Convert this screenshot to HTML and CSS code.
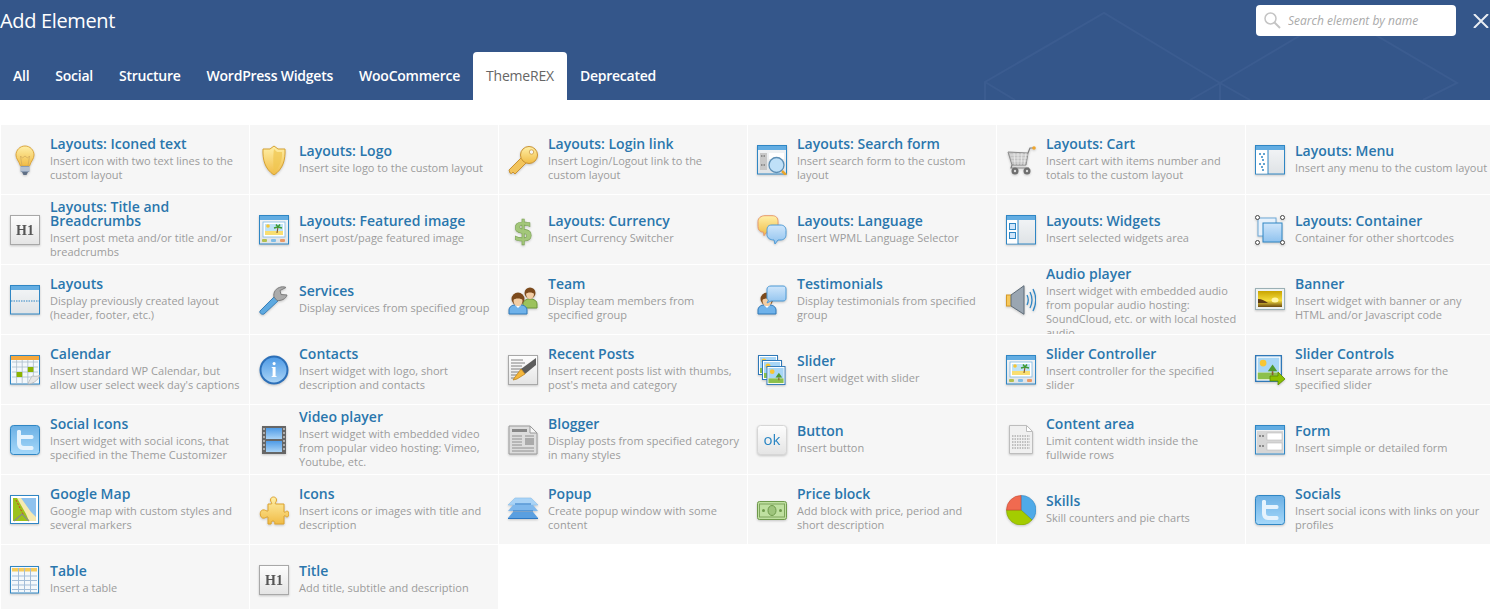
FILE: index.html
```html
<!DOCTYPE html>
<html>
<head>
    <meta charset="UTF-8">
    <title>Add Element</title>
    <link rel="stylesheet" href="styles.css">
</head>
<body>
    <!-- shared icon drawings, 30x30 -->
    <svg class="sprite" xmlns="http://www.w3.org/2000/svg">
        <defs>
            <linearGradient id="gGold" x1="0" y1="0" x2="0" y2="1"><stop offset="0" stop-color="#fff0a8"/><stop offset="1" stop-color="#f0bb45"/></linearGradient>
            <linearGradient id="gWin" x1="0" y1="0" x2="0" y2="1"><stop offset="0" stop-color="#f4f6f8"/><stop offset="1" stop-color="#dfe3e6"/></linearGradient>
            <linearGradient id="gBlue" x1="0" y1="0" x2="0" y2="1"><stop offset="0" stop-color="#cfe6fb"/><stop offset="1" stop-color="#8fc2ee"/></linearGradient>
            <linearGradient id="gBox" x1="0" y1="0" x2="0" y2="1"><stop offset="0" stop-color="#fdfdfd"/><stop offset="1" stop-color="#e4e4e4"/></linearGradient>
            <linearGradient id="gTw" x1="0" y1="0" x2="0" y2="1"><stop offset="0" stop-color="#6cb0e4"/><stop offset="1" stop-color="#a5d8fa"/></linearGradient>
            <linearGradient id="gBanner" x1="0" y1="0" x2="0" y2="1"><stop offset="0" stop-color="#c9a400"/><stop offset=".6" stop-color="#f4dc3c"/><stop offset="1" stop-color="#6b4a10"/></linearGradient>
            <linearGradient id="gFilm" x1="0" y1="0" x2="0" y2="1"><stop offset="0" stop-color="#4f9be6"/><stop offset="1" stop-color="#a9d3f6"/></linearGradient>
        </defs>

        <symbol id="i-win" viewBox="0 0 30 30">
            <rect x=".5" y=".5" width="29" height="28.5" fill="url(#gWin)" stroke="#2f86c4"/>
            <rect x="1" y="1" width="28" height="4" fill="#63ade2"/>
        </symbol>
        <symbol id="i-bulb" viewBox="0 0 30 30">
            <path d="M15 1C10 1 6 5 6 10c0 4 3 6 4.500 11h9c1.500-5 4.500-7 4.500-11 0-5-4-9-9-9z" fill="url(#gGold)" stroke="#dca63c"/>
            <path d="M12 21l-1.500-10 2 2 2.500-2 2.500 2 2-2-1.500 10" fill="none" stroke="#cfa85c" stroke-width=".7"/>
            <rect x="10.500" y="21" width="9" height="6" rx="1" fill="#8a9cb4"/>
            <path d="M10.500 23h9M10.500 25h9" stroke="#dfe6ee"/>
            <path d="M12 27h6l-1.500 3h-3z" fill="#5f6f85"/>
        </symbol>
        <symbol id="i-shield" viewBox="0 0 30 30">
            <path d="M15 1l4 3h7c.500 11-2 20-11 26C6 24 3.500 15 4 4h7z" fill="url(#gGold)" stroke="#d6a232"/>
            <path d="M15 4c-1 6-1 16 0 23 6-5 8.500-12 8-20h-5z" fill="#f0c650" opacity=".7"/>
        </symbol>
        <symbol id="i-key" viewBox="0 0 30 30">
            <path d="M1 25L14 12l5 5L7 29l-2-2-1.500 1.500L2 28z" fill="#f2c45c" stroke="#c99232"/>
            <circle cx="21" cy="10" r="8.500" fill="url(#gGold)" stroke="#c99232"/>
            <circle cx="23.500" cy="7" r="2.200" fill="#f5f5f5" stroke="#c99232" stroke-width=".7"/>
        </symbol>
        <symbol id="i-searchform" viewBox="0 0 30 30">
            <use href="#i-win"/>
            <rect x="3" y="8" width="7" height="17" fill="#c8c8c8"/>
            <rect x="12" y="8" width="15" height="6" fill="#fff"/>
            <path d="M4 11h4M4 20h4" stroke="#555" stroke-dasharray="1.500 1"/>
            <circle cx="19.500" cy="20" r="7.500" fill="#bfe0f8" stroke="#5d8fb5" stroke-width="1.300"/>
            <path d="M25 26l4 4" stroke="#e8a52c" stroke-width="2.500"/>
        </symbol>
        <symbol id="i-cart" viewBox="0 0 30 30">
            <path d="M2 7l20 1-2 12H6z" fill="#c4c4c4" stroke="#8c8c8c"/>
            <path d="M4 10h18M5 13h16M5.500 16h15M8 8l1 12M12 8v12M16 8l-1 12M20 8l-2 12" stroke="#f0f0f0" stroke-width=".7" fill="none"/>
            <path d="M22 8l2-5h3M6 20l-1 3h18" stroke="#808080" stroke-width="1.200" fill="none"/>
            <circle cx="28" cy="3" r="1.800" fill="#f0a52c"/>
            <circle cx="9" cy="26" r="3.500" fill="#6e6e6e"/><circle cx="9" cy="26" r="1.200" fill="#ddd"/>
            <circle cx="21" cy="26" r="3.500" fill="#6e6e6e"/><circle cx="21" cy="26" r="1.200" fill="#ddd"/>
        </symbol>
        <symbol id="i-menu" viewBox="0 0 30 30">
            <use href="#i-win"/>
            <rect x="1" y="5" width="12" height="23.500" fill="#fff"/>
            <path d="M13 5v24" stroke="#2f86c4"/>
            <path d="M4 9h2M8 9h2M6 12h2M7 15h2M4 19h2M8 19h2M6 22h2M7 25h2" stroke="#2f86c4" stroke-width="1.400"/>
        </symbol>
        <symbol id="i-box" viewBox="0 0 30 30">
            <rect x=".5" y=".5" width="29" height="29" fill="url(#gBox)" stroke="#a8a8a8"/>
        </symbol>
        <symbol id="i-pic" viewBox="0 0 30 30">
            <use href="#i-win"/>
            <rect x="4" y="7" width="22" height="15" fill="#fff" stroke="#7db8e4" stroke-width=".8"/>
            <rect x="6" y="9" width="18" height="7" fill="#bfe3f6"/>
            <rect x="6" y="16" width="18" height="4" fill="#f8de72"/>
            <circle cx="9" cy="11" r="1.800" fill="#f8c634"/>
            <path d="M18 18l1-6" stroke="#8a5a2a" stroke-width="1.200"/>
            <path d="M19 12l-4 1M19 12l4 1M19 12l-2-2.500M19 12l2-2.500" stroke="#3f9a34" stroke-width="1.500"/>
            <rect x="3" y="24" width="5" height="3" rx="1" fill="#b4c050"/>
            <rect x="12" y="24" width="5" height="3" rx="1" fill="#7fbde8"/>
            <rect x="21" y="24" width="5" height="3" rx="1" fill="#ec9a66"/>
        </symbol>
        <symbol id="i-bubbles" viewBox="0 0 30 30">
            <path d="M8 .700h7c4 0 6 2 6 6v5c0 4-2 6-6 6H9l-2 3-.500-3.500C3 17 1 15 1 11.500v-5C1 3 4 .700 8 .700z" fill="url(#gGold)" stroke="#e89a6a"/>
            <path d="M15 10h8c4 0 6 2 6 5.500v4c0 3.500-2 5.500-6 5.500h-2l-3 4-1-4c-4 0-7-2-7-5.500v-4C10 12 11 10 15 10z" fill="url(#gBlue)" stroke="#4d9ad6"/>
        </symbol>
        <symbol id="i-widgets" viewBox="0 0 30 30">
            <use href="#i-win"/>
            <rect x="1" y="5" width="11" height="23.500" fill="#fff"/>
            <path d="M12 5v24" stroke="#2f86c4"/>
            <rect x="3.500" y="8.500" width="6" height="6" fill="#cfe6fb" stroke="#2f86c4"/>
            <rect x="3.500" y="17.500" width="6" height="6" fill="#cfe6fb" stroke="#2f86c4"/>
        </symbol>
        <symbol id="i-container" viewBox="0 0 30 30">
            <rect x="3" y="3" width="18" height="18" fill="#e6f1fb" stroke="#6fa9d8"/>
            <rect x="8" y="8" width="19" height="19" fill="url(#gBlue)" stroke="#2f86c4"/>
            <g fill="#fff" stroke="#444"><circle cx="2.500" cy="2.500" r="2"/><circle cx="27.500" cy="2.500" r="2"/><circle cx="2.500" cy="27.500" r="2"/><circle cx="27.500" cy="27.500" r="2"/></g>
        </symbol>
        <symbol id="i-layout" viewBox="0 0 30 30">
            <use href="#i-win"/>
            <path d="M1 16h28" stroke="#2f86c4" stroke-dasharray="1.500 1"/>
        </symbol>
        <symbol id="i-wrench" viewBox="0 0 30 30">
            <path d="M1 26L16 11l4 4L5 29c-2 1-5-1-4-3z" fill="#5ea9e0" stroke="#3a80b8"/>
            <path d="M15 12c-1-5 2-9 7-10 2-.500 4 0 5 .500l-6 3 1 4 6 .500c-1 4-6 6-10 5.500z" fill="#ababab" stroke="#7c7c7c"/>
        </symbol>
        <symbol id="i-person" viewBox="0 0 20 24">
            <path d="M1 23v-4c0-3 3-5 6-5h6c3 0 6 2 6 5v4z" fill="#6fb2ea" stroke="#2f78b8"/>
            <path d="M7 14l3 3 3-3z" fill="#fff"/>
            <circle cx="10" cy="8" r="6.500" fill="#7c4a1c"/>
            <path d="M5.500 9c1-2 8-2 9 0 0 4-2 6-4.500 6s-4.500-2-4.500-6z" fill="#f2cda4"/>
        </symbol>
        <symbol id="i-team" viewBox="0 0 30 30">
            <path d="M15 23v-4c0-3 2-4 5-5h4c3 1 5 2 5 5v4z" fill="#9cc25c" stroke="#6d9638"/>
            <circle cx="22" cy="8" r="5.500" fill="#7c4a1c"/>
            <path d="M18 9c1-2 7-2 8 0 0 3-2 5-4 5s-4-2-4-5z" fill="#f2cda4"/>
            <use href="#i-person" x="0" y="6" width="20" height="24"/>
        </symbol>
        <symbol id="i-testi" viewBox="0 0 30 30">
            <use href="#i-person" x="0" y="6" width="20" height="24"/>
            <path d="M14 1h12c2 0 3 1 3 3v9c0 2-1 3-3 3H14l-4 2 1.500-3c-1-.500-1.500-1-1.500-2V4c0-2 2-3 4-3z" fill="url(#gBlue)" stroke="#4d9ad6"/>
        </symbol>
        <symbol id="i-speaker" viewBox="0 0 30 30">
            <rect x=".5" y="10" width="5" height="11" fill="#f6c85c" stroke="#d59a28"/>
            <path d="M5 10L18 .700v28.600L5 21z" fill="#9aa6b2" stroke="#5f6c78"/>
            <path d="M21 10c1.500 3 1.500 7 0 10M24 7c2.500 5 2.500 11 0 16M27 4c3.500 7 3.500 15 0 22" fill="none" stroke="#2f86c4" stroke-width="1.300"/>
        </symbol>
        <symbol id="i-banner" viewBox="0 0 30 30">
            <rect x=".5" y="3.500" width="29" height="21" fill="#eef2f2" stroke="#9bb0b5"/>
            <rect x="3" y="6" width="24" height="16" fill="url(#gBanner)"/>
            <path d="M3 14c4 0 7 2 10 4H3z" fill="#5c3a14"/>
            <ellipse cx="20" cy="15" rx="3.500" ry="2.500" fill="#fff6a8"/>
        </symbol>
        <symbol id="i-calendar" viewBox="0 0 30 30">
            <rect x=".5" y=".5" width="29" height="28.500" fill="#f4f8fb" stroke="#2f86c4"/>
            <rect x="1" y="1" width="28" height="4" fill="#f6a83c"/>
            <path d="M2 7h26M2 12h26M2 17h26M2 22h26M6.600 5v24M12.200 5v24M17.800 5v24M23.400 5v24" stroke="#a9bdcb" stroke-width=".8"/>
            <rect x="6.600" y="17" width="5.600" height="5" fill="#8cb400"/>
            <rect x="17.800" y="12" width="5.600" height="5" fill="#8cb400"/>
            <path d="M18 29c4 0 10-3 12-9-3 2-6 1-8 1-1 2-3 5-4 8z" fill="#e6e6e6" stroke="#b0b0b0" stroke-width=".7"/>
        </symbol>
        <symbol id="i-info" viewBox="0 0 30 30">
            <circle cx="15" cy="15" r="14.500" fill="#2c6fb8"/>
            <circle cx="15" cy="15" r="12.500" fill="url(#gFilm)"/>
        </symbol>
        <symbol id="i-posts" viewBox="0 0 30 30">
            <use href="#i-box"/>
            <path d="M3 5h12M3 8h14M3 11h11M3 14h12M3 17h8M3 20h6M3 23h4" stroke="#666" stroke-width=".8"/>
            <path d="M28 3l-15 11 4 5 11-9z" fill="#5c5c5c"/>
            <path d="M13 14l-6 8-2 3 4-1 8-5z" fill="#f4b63c" stroke="#b67c14" stroke-width=".7"/>
        </symbol>
        <symbol id="i-picture" viewBox="0 0 20 20">
            <rect x=".5" y=".5" width="19" height="19" fill="#fff" stroke="#2f78b8"/>
            <rect x="2" y="2" width="16" height="11" fill="#a8d6f6"/>
            <rect x="2" y="13" width="16" height="5" fill="#8cc04c"/>
            <circle cx="6" cy="6" r="2.500" fill="#f8c634"/>
            <path d="M13 7l3.500 5h-7z" fill="#4f9a30"/>
            <path d="M13 12v3" stroke="#8a5a2a" stroke-width="1.200"/>
        </symbol>
        <symbol id="i-slider" viewBox="0 0 30 30">
            <use href="#i-picture" x="0" y="0" width="22" height="20"/>
            <use href="#i-picture" x="4" y="5" width="22" height="20"/>
            <use href="#i-picture" x="8" y="11" width="22" height="19"/>
        </symbol>
        <symbol id="i-arrows" viewBox="0 0 30 30">
            <use href="#i-picture" x="0" y="0" width="27" height="27"/>
            <path d="M15 21h8v-4l7 7-7 6v-4h-8z" fill="#8cc000" stroke="#5b8a00" stroke-width=".8"/>
        </symbol>
        <symbol id="i-twitter" viewBox="0 0 30 30">
            <rect x=".5" y=".5" width="29" height="29" rx="3" fill="url(#gTw)" stroke="#2f86c4"/>
            <path d="M7 6c0-1.500 4-1.500 4 0v4h11c2 0 2 4 0 4H11v4c0 2 1 3 3 3h8c2 0 2 4 0 4h-9c-4 0-6-3-6-7z" fill="#e6f3fd"/>
        </symbol>
        <symbol id="i-film" viewBox="0 0 30 30">
            <rect x="3" y="1" width="24" height="28" fill="#666"/>
            <rect x="7" y="3" width="16" height="11" fill="url(#gFilm)"/>
            <rect x="7" y="16" width="16" height="11" fill="url(#gFilm)"/>
            <path d="M5 3v24M25 3v24" stroke="#ddd" stroke-width="1.200" stroke-dasharray="2 2"/>
        </symbol>
        <symbol id="i-news" viewBox="0 0 30 30">
            <path d="M1 1h21l7 7v21H1z" fill="#ddd" stroke="#9a9a9a"/>
            <path d="M22 1v7h7z" fill="#f6f6f6" stroke="#9a9a9a"/>
            <rect x="4" y="4" width="15" height="3" fill="#888"/>
            <path d="M4 11h10M4 14h10M4 17h10M4 20h10M4 23h22M4 26h22M17 11h9" stroke="#888" stroke-width=".9"/>
            <rect x="17" y="13" width="9" height="7" fill="#aaa"/>
        </symbol>
        <symbol id="i-button" viewBox="0 0 30 30">
            <rect x=".5" y=".5" width="29" height="29" rx="3" fill="url(#gBox)" stroke="#d6d6d6"/>
        </symbol>
        <symbol id="i-doc" viewBox="0 0 30 30">
            <path d="M3.500 .5h17l6 6v22h-23z" fill="#f0f0f0" stroke="#bdbdbd"/>
            <path d="M20.500 .5v6h6z" fill="#fff" stroke="#bdbdbd"/>
            <path d="M6 11h18M6 14h18M6 17h18M6 20h18M6 23h18" stroke="#777" stroke-dasharray="1.500 1" stroke-width=".8"/>
        </symbol>
        <symbol id="i-form" viewBox="0 0 30 30">
            <use href="#i-win"/>
            <rect x="2" y="6" width="26" height="22" fill="#d6d6d6"/>
            <rect x="12" y="8" width="15" height="7" fill="#fff" stroke="#bbb" stroke-width=".6"/>
            <rect x="12" y="18" width="15" height="7" fill="#fff" stroke="#bbb" stroke-width=".6"/>
            <path d="M4 11h6M4 21h6" stroke="#444" stroke-dasharray="2 1"/>
        </symbol>
        <symbol id="i-map" viewBox="0 0 30 30">
            <rect x=".5" y=".5" width="28" height="28" fill="#fff" stroke="#2f86c4"/>
            <rect x="3" y="3" width="23" height="23" fill="#8fc2ee"/>
            <path d="M3 3h8l10 14 5 5v4H3z" fill="#f6e9b0"/>
            <path d="M3 3h4l9 16 3 7H3z" fill="#9cc21c"/>
            <path d="M6 5l5 10 3 6" stroke="#d03a2a" stroke-dasharray="2 1.500" fill="none"/>
            <path d="M4 26l8-7 7 7" stroke="#8a8a8a" stroke-width="1.200" fill="none"/>
        </symbol>
        <symbol id="i-puzzle" viewBox="0 0 30 30">
            <path d="M9 9h3.500c1-1-1-2-1-4 0-4 6-4 6 0 0 2-2 3-1 4H25v8c1 1 2-1 3-1 2.500 0 2.500 6 0 6-1 0-2-2-3-1v8H16c-1 1 1-3-2-3s-1 3-2 3H9v-7c-1-1-3 2-5.500 1-3-1.500-3-7 0-8C6 14 8 17 9 16z" fill="url(#gGold)" stroke="#dda22c"/>
        </symbol>
        <symbol id="i-popup" viewBox="0 0 30 30">
            <path d="M7 3h16l7 7H0z" fill="#a9d3f6" stroke="#8cc0ec" stroke-width=".6"/>
            <path d="M5 10h20l5 6H0z" fill="#7fb8ec"/>
            <path d="M5 17h20l5 6H0z" fill="#5a9fe0"/>
            <path d="M7 9h16M5 16h20M0 23.500h30" stroke="#2c78c4" stroke-width="1.200"/>
        </symbol>
        <symbol id="i-money" viewBox="0 0 30 30">
            <rect x=".5" y="6.500" width="29" height="18" rx="2" fill="#bfe0a0" stroke="#6f9a4c"/>
            <rect x="2.500" y="9" width="25" height="13" fill="none" stroke="#7ea45c"/>
            <ellipse cx="15" cy="15.500" rx="4" ry="5" fill="#9ec47c" stroke="#6f9a4c"/>
            <circle cx="6.500" cy="15.500" r="1.500" fill="#6f9a4c"/>
            <circle cx="23.500" cy="15.500" r="1.500" fill="#6f9a4c"/>
        </symbol>
        <symbol id="i-pie" viewBox="0 0 30 30">
            <path d="M15 15V.5A14.500 14.500 0 0 1 26 25z" fill="#4faae8" stroke="#2f86c4" stroke-width=".6"/>
            <path d="M15 15L26 25A14.500 14.500 0 0 1 .5 15z" fill="#a4cc00" stroke="#7aa000" stroke-width=".6"/>
            <path d="M15 15H.5A14.500 14.500 0 0 1 15 .5z" fill="#f06a50" stroke="#c94c34" stroke-width=".6"/>
        </symbol>
        <symbol id="i-table" viewBox="0 0 30 30">
            <rect x=".5" y="1.500" width="28" height="26.500" fill="#f4f8fb" stroke="#2f86c4"/>
            <rect x="2" y="3" width="25" height="3.500" fill="#f6cc5c"/>
            <path d="M2 11h25M2 15.500h25M2 20h25M2 24.500h25M8.500 3v24M14.500 3v24M20.500 3v24" stroke="#a3bdd8"/>
        </symbol>
    </svg>

    <div class="header">
        <svg class="pattern" width="1490" height="100" viewBox="0 0 1490 100">
            <path d="M985 100V82L1104 13l116 70v17M985 82l30 18M1220 83l30 17M1220 83l-30 17M1220 83l118-70 119 70-34 17" fill="none" stroke="#3b5c90" stroke-width="2"/>
        </svg>
        <div class="topbar">
            <div class="title">Add Element</div>
            <div class="search">
                <svg class="search-icon" width="17" height="17" viewBox="0 0 17 17">
                    <circle cx="6.500" cy="6.500" r="5.500" fill="none" stroke="#c4c4c4" stroke-width="1.500"/>
                    <path d="M10.500 10.500l5.500 5.500" stroke="#c4c4c4" stroke-width="2"/>
                </svg>
                <input type="text" placeholder="Search element by name">
            </div>
            <svg class="close" width="16" height="14" viewBox="0 0 16 14">
                <path d="M1 0l14 14M15 0L1 14" stroke="#e9edf3" stroke-width="2"/>
            </svg>
        </div>
        <div class="tabs">
            <a class="tab">All</a>
            <a class="tab">Social</a>
            <a class="tab">Structure</a>
            <a class="tab">WordPress Widgets</a>
            <a class="tab">WooCommerce</a>
            <a class="tab active">ThemeREX</a>
            <a class="tab">Deprecated</a>
        </div>
    </div>

    <div class="grid">
        <a class="card"><svg class="icon"><use href="#i-bulb"/></svg><div class="text"><h4>Layouts: Iconed text</h4><p>Insert icon with two text lines to the custom layout</p></div></a>
        <a class="card"><svg class="icon"><use href="#i-shield"/></svg><div class="text"><h4>Layouts: Logo</h4><p>Insert site logo to the custom layout</p></div></a>
        <a class="card"><svg class="icon"><use href="#i-key"/></svg><div class="text"><h4>Layouts: Login link</h4><p>Insert Login/Logout link to the custom layout</p></div></a>
        <a class="card"><svg class="icon"><use href="#i-searchform"/></svg><div class="text"><h4>Layouts: Search form</h4><p>Insert search form to the custom layout</p></div></a>
        <a class="card"><svg class="icon"><use href="#i-cart"/></svg><div class="text"><h4>Layouts: Cart</h4><p>Insert cart with items number and totals to the custom layout</p></div></a>
        <a class="card"><svg class="icon"><use href="#i-menu"/></svg><div class="text"><h4>Layouts: Menu</h4><p>Insert any menu to the custom layout</p></div></a>

        <a class="card"><svg class="icon"><use href="#i-box"/><text x="15" y="20" class="svg-h1">H1</text></svg><div class="text"><h4>Layouts: Title and Breadcrumbs</h4><p>Insert post meta and/or title and/or breadcrumbs</p></div></a>
        <a class="card"><svg class="icon"><use href="#i-pic"/></svg><div class="text"><h4>Layouts: Featured image</h4><p>Insert post/page featured image</p></div></a>
        <a class="card"><svg class="icon"><text x="15" y="26" class="svg-dollar">$</text></svg><div class="text"><h4>Layouts: Currency</h4><p>Insert Currency Switcher</p></div></a>
        <a class="card"><svg class="icon"><use href="#i-bubbles"/></svg><div class="text"><h4>Layouts: Language</h4><p>Insert WPML Language Selector</p></div></a>
        <a class="card"><svg class="icon"><use href="#i-widgets"/></svg><div class="text"><h4>Layouts: Widgets</h4><p>Insert selected widgets area</p></div></a>
        <a class="card"><svg class="icon"><use href="#i-container"/></svg><div class="text"><h4>Layouts: Container</h4><p>Container for other shortcodes</p></div></a>

        <a class="card"><svg class="icon"><use href="#i-layout"/></svg><div class="text"><h4>Layouts</h4><p>Display previously created layout (header, footer, etc.)</p></div></a>
        <a class="card"><svg class="icon"><use href="#i-wrench"/></svg><div class="text"><h4>Services</h4><p>Display services from specified group</p></div></a>
        <a class="card"><svg class="icon"><use href="#i-team"/></svg><div class="text"><h4>Team</h4><p>Display team members from specified group</p></div></a>
        <a class="card"><svg class="icon"><use href="#i-testi"/></svg><div class="text"><h4>Testimonials</h4><p>Display testimonials from specified group</p></div></a>
        <a class="card"><svg class="icon"><use href="#i-speaker"/></svg><div class="text"><h4>Audio player</h4><p>Insert widget with embedded audio from popular audio hosting: SoundCloud, etc. or with local hosted audio</p></div></a>
        <a class="card"><svg class="icon"><use href="#i-banner"/></svg><div class="text"><h4>Banner</h4><p>Insert widget with banner or any HTML and/or Javascript code</p></div></a>

        <a class="card"><svg class="icon"><use href="#i-calendar"/></svg><div class="text"><h4>Calendar</h4><p>Insert standard WP Calendar, but allow user select week day's captions</p></div></a>
        <a class="card"><svg class="icon"><use href="#i-info"/><text x="15" y="22" class="svg-i">i</text></svg><div class="text"><h4>Contacts</h4><p>Insert widget with logo, short description and contacts</p></div></a>
        <a class="card"><svg class="icon"><use href="#i-posts"/></svg><div class="text"><h4>Recent Posts</h4><p>Insert recent posts list with thumbs, post's meta and category</p></div></a>
        <a class="card"><svg class="icon"><use href="#i-slider"/></svg><div class="text"><h4>Slider</h4><p>Insert widget with slider</p></div></a>
        <a class="card"><svg class="icon"><use href="#i-pic"/></svg><div class="text"><h4>Slider Controller</h4><p>Insert controller for the specified slider</p></div></a>
        <a class="card"><svg class="icon"><use href="#i-arrows"/></svg><div class="text"><h4>Slider Controls</h4><p>Insert separate arrows for the specified slider</p></div></a>

        <a class="card"><svg class="icon"><use href="#i-twitter"/></svg><div class="text"><h4>Social Icons</h4><p>Insert widget with social icons, that specified in the Theme Customizer</p></div></a>
        <a class="card"><svg class="icon"><use href="#i-film"/></svg><div class="text"><h4>Video player</h4><p>Insert widget with embedded video from popular video hosting: Vimeo, Youtube, etc.</p></div></a>
        <a class="card"><svg class="icon"><use href="#i-news"/></svg><div class="text"><h4>Blogger</h4><p>Display posts from specified category in many styles</p></div></a>
        <a class="card"><svg class="icon"><use href="#i-button"/><text x="15" y="20" class="svg-ok">ok</text></svg><div class="text"><h4>Button</h4><p>Insert button</p></div></a>
        <a class="card"><svg class="icon"><use href="#i-doc"/></svg><div class="text"><h4>Content area</h4><p>Limit content width inside the fullwide rows</p></div></a>
        <a class="card"><svg class="icon"><use href="#i-form"/></svg><div class="text"><h4>Form</h4><p>Insert simple or detailed form</p></div></a>

        <a class="card"><svg class="icon"><use href="#i-map"/></svg><div class="text"><h4>Google Map</h4><p>Google map with custom styles and several markers</p></div></a>
        <a class="card"><svg class="icon"><use href="#i-puzzle"/></svg><div class="text"><h4>Icons</h4><p>Insert icons or images with title and description</p></div></a>
        <a class="card"><svg class="icon"><use href="#i-popup"/></svg><div class="text"><h4>Popup</h4><p>Create popup window with some content</p></div></a>
        <a class="card"><svg class="icon"><use href="#i-money"/></svg><div class="text"><h4>Price block</h4><p>Add block with price, period and short description</p></div></a>
        <a class="card"><svg class="icon"><use href="#i-pie"/></svg><div class="text"><h4>Skills</h4><p>Skill counters and pie charts</p></div></a>
        <a class="card"><svg class="icon"><use href="#i-twitter"/></svg><div class="text"><h4>Socials</h4><p>Insert social icons with links on your profiles</p></div></a>

        <a class="card"><svg class="icon"><use href="#i-table"/></svg><div class="text"><h4>Table</h4><p>Insert a table</p></div></a>
        <a class="card"><svg class="icon"><use href="#i-box"/><text x="15" y="20" class="svg-h1">H1</text></svg><div class="text"><h4>Title</h4><p>Add title, subtitle and description</p></div></a>
    </div>
</body>
</html>
```

FILE: styles.css
```css
html, body {
    margin: 0;
    padding: 0;
    height: 609px;
    overflow: hidden;
    background: #fff;
}
body {
    font-family: "Open Sans", "Noto Sans", sans-serif;
}
.sprite {
    display: block;
    width: 0;
    height: 0;
}
.header {
    position: relative;
    height: 100px;
    background: #34568a;
    overflow: hidden;
}
.pattern {
    position: absolute;
    left: 0;
    top: 0;
}
.topbar {
    position: relative;
    display: flex;
    align-items: flex-start;
    height: 52px;
}
.title {
    color: #fff;
    font-size: 20px;
    line-height: 42px;
    letter-spacing: -0.35px;
}
.search {
    display: flex;
    align-items: center;
    width: 200px;
    height: 31px;
    margin: 5px 0 0 auto;
    background: #fff;
    border-radius: 4px;
    box-sizing: border-box;
    padding-left: 8px;
}
.search-icon {
    flex: none;
}
.search input {
    flex: 1;
    min-width: 0;
    border: none;
    outline: none;
    background: none;
    padding: 0 0 0 7px;
    font: italic 12px "Open Sans", sans-serif;
}
.search input::placeholder {
    color: #aaa;
    opacity: 1;
}
.close {
    margin: 14px 1px 0 17px;
}
.tabs {
    position: relative;
    display: flex;
    height: 48px;
}
.tab {
    padding: 0 13px;
    line-height: 48px;
    font-size: 14px;
    font-weight: 600;
    letter-spacing: -0.24px;
    color: #fff;
}
.tab.active {
    background: #fff;
    color: #666;
    font-weight: 400;
    letter-spacing: -0.2px;
    border-radius: 4px 4px 0 0;
}
.grid {
    display: grid;
    grid-template-columns: repeat(6, 248px);
    grid-auto-rows: 69px;
    gap: 1px;
    padding: 25px 0 0 1px;
}
.card {
    display: flex;
    align-items: center;
    background: #f6f6f6;
    padding: 2px 0 2px 9px;
    box-sizing: border-box;
    overflow: hidden;
}
.icon {
    flex: none;
    width: 30px;
    height: 30px;
    margin-right: 10px;
    overflow: visible;
    filter: drop-shadow(0 1px 1px rgba(0, 0, 0, .2));
}
.text {
    align-self: safe center;
    width: 193px;
}
.text h4 {
    margin: 0 0 3px;
    font-size: 14px;
    line-height: 14px;
    font-weight: 600;
    color: #2a76ad;
}
.text p {
    margin: 0;
    font-size: 11px;
    line-height: 14px;
    color: #9c9c9c;
}
.svg-h1 {
    font: bold 14px "Liberation Serif", serif;
    fill: #555;
    text-anchor: middle;
}
.svg-dollar {
    font: bold 29px "DejaVu Sans", sans-serif;
    fill: #a3c77a;
    stroke: #7da356;
    stroke-width: .6px;
    text-anchor: middle;
}
.svg-i {
    font: bold 20px "Liberation Serif", serif;
    fill: #fff;
    text-anchor: middle;
}
.svg-ok {
    font: 15px "Open Sans", sans-serif;
    fill: #2a86c4;
    text-anchor: middle;
}
```
